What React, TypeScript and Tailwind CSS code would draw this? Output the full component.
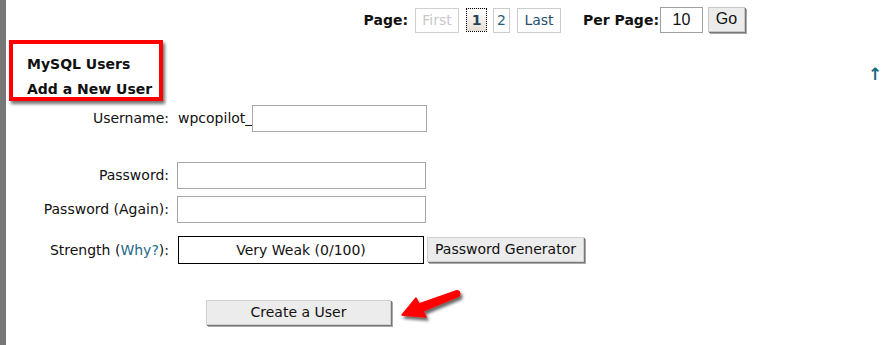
export default function App() {
  const font = { fontFamily: '"DejaVu Sans", Verdana, sans-serif' };
  const arial = { fontFamily: '"Liberation Sans", Arial, sans-serif' };
  return (
    <div
      className="w-[884px] h-[345px] bg-white border-l-[6px] border-[#777777] text-[14px] text-[#111111] overflow-hidden relative"
      style={font}
    >
      {/* pagination */}
      <div className="flex items-center h-[40px] pl-[352px] whitespace-nowrap">
        <span className="font-bold w-[50px] text-right">Page:</span>
        <span className="ml-[7px] h-[25px] w-[44px] flex items-center justify-center border border-[#d0d0d0] text-[#c8c8c8]">
          First
        </span>
        <span className="ml-[7px] h-[24px] w-[21px] flex items-center justify-center border border-dotted border-black bg-gradient-to-b from-white to-[#e6ddd3] font-bold text-[#22445a]">
          1
        </span>
        <span className="ml-[6px] h-[25px] w-[17px] flex items-center justify-center border border-[#cccccc] text-[#1f6080]">
          2
        </span>
        <span className="ml-[7px] h-[25px] w-[44px] flex items-center justify-center border border-[#cccccc] text-[#1f5070]">
          Last
        </span>
        <span className="ml-[22px] w-[75px] shrink-0 font-bold">Per Page:</span>
        <span
          className="ml-[2px] w-[43px] h-[26px] flex items-center justify-center border border-[#a0a0a0] text-[16px]"
          style={arial}
        >
          10
        </span>
        <span
          className="ml-[5px] w-[37px] h-[25px] mb-[2px] flex items-center justify-center bg-[#ececec] border border-[#c8c8c8] shadow-[1px_1px_0_#777,2px_2px_0_#aaa] text-[16px]"
          style={arial}
        >
          Go
        </span>
      </div>

      {/* highlighted headings */}
      <div className="ml-[3px] w-[154px] h-[61px] border-[4px] border-[#ff0000] shadow-[2px_3px_3px_rgba(0,0,0,0.55)] pl-[14px] pt-[8px] font-bold text-[14px] leading-[25px]">
        <div>MySQL Users</div>
        <div>Add a New User</div>
      </div>
      <span className="absolute left-[862px] top-[66px] text-[#1b6b82] font-bold text-[17px] leading-none">↑</span>

      {/* form */}
      <div className="mt-[3px] flex flex-col">
        <div className="flex items-center h-[28px]">
          <span className="w-[163px] text-right">Username:</span>
          <span className="ml-[9px]">wpcopilot_</span>
          <span className="w-[175px] h-[27px] border border-[#a8a8a8]" />
        </div>
        <div className="flex items-center h-[28px] mt-[29px]">
          <span className="w-[163px] text-right">Password:</span>
          <span className="ml-[8px] w-[249px] h-[27px] border border-[#a8a8a8]" />
        </div>
        <div className="flex items-center h-[28px] mt-[6px]">
          <span className="w-[163px] text-right">Password (Again):</span>
          <span className="ml-[8px] w-[249px] h-[27px] border border-[#a8a8a8]" />
        </div>
        <div className="flex items-center h-[28px] mt-[13px]">
          <span className="w-[163px] text-right">
            Strength (<span className="text-[#1f6a8a]">Why?</span>):
          </span>
          <span className="ml-[9px] w-[246px] h-[28px] border border-black flex items-center justify-center">
            Very Weak (0/100)
          </span>
          <span className="ml-[3px] w-[157px] h-[25px] mb-[2px] bg-[#ececec] border border-[#d0d0d0] shadow-[1px_1px_0_#777,2px_2px_0_#aaa] flex items-center justify-center">
            Password Generator
          </span>
        </div>
        <div className="flex items-center mt-[35px]">
          <span className="ml-[200px] w-[185px] h-[25px] bg-[#ececec] border border-[#d0d0d0] shadow-[1px_1px_0_#777,2px_2px_0_#aaa] flex items-center justify-center">
            Create a User
          </span>
          <svg width="66" height="40" viewBox="0 0 66 40" className="ml-[8px] -mt-[14px]">
            <defs>
              <filter id="sh" x="-20%" y="-20%" width="150%" height="160%">
                <feDropShadow dx="2" dy="3" stdDeviation="1.6" floodColor="#000" floodOpacity="0.6" />
              </filter>
            </defs>
            <g filter="url(#sh)">
              <path
                d="M57 6 C60 5 62 8 60 11 L24 26 L27 32 L3 30 L17 13 L20 19 Z"
                fill="#ff0000"
                strokeLinejoin="round"
                stroke="#ff0000"
                strokeWidth="1.5"
              />
            </g>
          </svg>
        </div>
      </div>
    </div>
  );
}
